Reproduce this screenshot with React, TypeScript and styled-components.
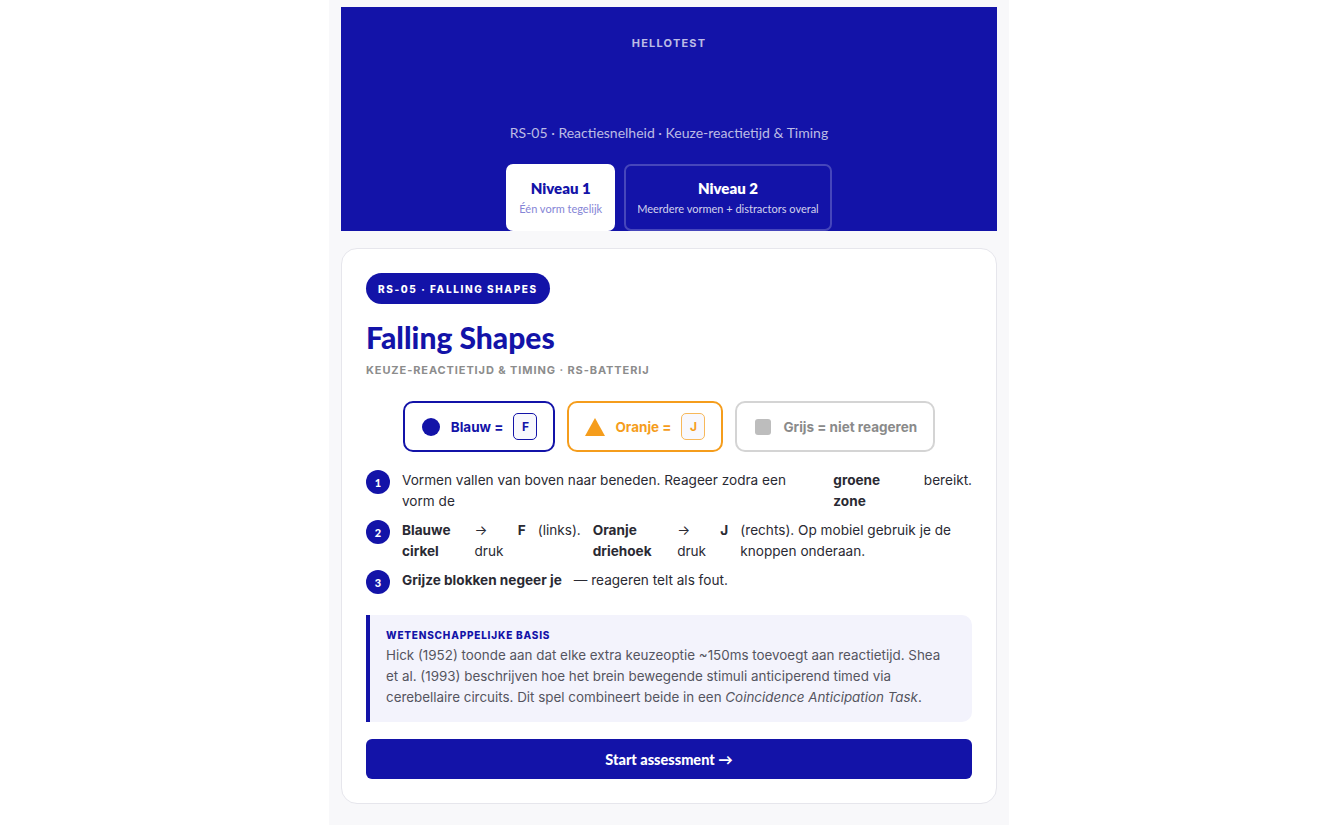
import React from "react"
import styled, { createGlobalStyle } from "styled-components"

const BLUE = "#1313a8"
const ORANGE = "#f59d1c"
const HEAD = `"Lato", "Inter", sans-serif`
const BODY = `"Inter", "Noto Sans", sans-serif`

const GlobalStyle = createGlobalStyle`
  html, body {
    margin: 0;
    padding: 0;
    background: #ffffff;
    font-family: ${BODY};
  }
  * { box-sizing: border-box; }
`

const Column = styled.div`
  width: 680px;
  min-height: 825px;
  margin: 0 auto;
  padding: 7px 12px 24px;
  background: #f8f8fa;
`

const Header = styled.header`
  background: ${BLUE};
  display: flex;
  flex-direction: column;
  align-items: center;
  padding-top: 29px;
  height: 224px;
`

const Brand = styled.div`
  font-family: ${BODY};
  font-size: 11px;
  font-weight: 700;
  letter-spacing: 1.2px;
  color: rgba(255, 255, 255, 0.72);
  line-height: 14px;
`

const Lead = styled.div`
  margin-top: 73px;
  font-family: ${HEAD};
  font-size: 14px;
  color: rgba(255, 255, 255, 0.72);
  line-height: 20px;
`

const Tabs = styled.div`
  margin-top: 21px;
  display: flex;
  gap: 9px;
`

const Tab = styled.div<{ $active?: boolean }>`
  display: flex;
  flex-direction: column;
  align-items: center;
  height: 67px;
  padding: 13px 11px 0;
  border-radius: 7px;
  background: ${p => (p.$active ? "#ffffff" : "transparent")};
  border: 2px solid ${p => (p.$active ? "#ffffff" : "rgba(255,255,255,0.22)")};
`

const TabTitle = styled.div<{ $active?: boolean }>`
  font-family: ${HEAD};
  font-weight: 800;
  font-size: 15px;
  line-height: 18px;
  color: ${p => (p.$active ? BLUE : "#ffffff")};
`

const TabSub = styled.div<{ $active?: boolean }>`
  margin-top: 5px;
  font-family: ${HEAD};
  font-size: 11px;
  line-height: 13px;
  color: ${p => (p.$active ? "#8585d6" : "rgba(255,255,255,0.82)")};
`

const Card = styled.section`
  margin-top: 17px;
  background: #ffffff;
  border: 1px solid #e6e6ec;
  border-radius: 16px;
  padding: 24px 24px 24px;
  display: flex;
  flex-direction: column;
`

const Pill = styled.div`
  align-self: flex-start;
  height: 31px;
  padding: 0 12px;
  border-radius: 16px;
  background: ${BLUE};
  color: #ffffff;
  font-family: ${BODY};
  font-size: 10px;
  font-weight: 800;
  letter-spacing: 1.6px;
  display: flex;
  align-items: center;
`

const Title = styled.h1`
  margin: 16px 0 0;
  font-family: ${HEAD};
  font-size: 30px;
  font-weight: 900;
  line-height: 34px;
  color: ${BLUE};
`

const Subtitle = styled.div`
  margin-top: 9px;
  font-family: ${BODY};
  font-size: 11px;
  font-weight: 700;
  letter-spacing: 0.9px;
  color: #8c8c8c;
  line-height: 14px;
`

const Legend = styled.div`
  margin-top: 24px;
  display: flex;
  justify-content: center;
  gap: 12px;
`

const LegendItem = styled.div<{ $color: string; $border: string }>`
  height: 51px;
  padding: 0 16px;
  display: flex;
  align-items: center;
  gap: 10px;
  border: 2px solid ${p => p.$border};
  border-radius: 10px;
  color: ${p => p.$color};
  font-family: ${BODY};
  font-size: 13.5px;
  font-weight: 700;
`

const IconSlot = styled.span`
  width: 20px;
  display: flex;
  justify-content: center;
`

const Key = styled.span<{ $color: string; $border: string }>`
  width: 24px;
  height: 27px;
  border: 1.5px solid ${p => p.$border};
  border-radius: 5px;
  background: #f8f8fd;
  color: ${p => p.$color};
  display: flex;
  align-items: center;
  justify-content: center;
  font-size: 12px;
  font-weight: 700;
`

const Steps = styled.ol`
  list-style: none;
  margin: 18px 0 0;
  padding: 0;
  display: flex;
  flex-direction: column;
  gap: 8px;
`

const Step = styled.li`
  display: flex;
  gap: 12px;
  align-items: flex-start;
  font-family: ${BODY};
  font-size: 13.6px;
  line-height: 21px;
  color: #2a2a33;

  strong {
    font-weight: 700;
  }
`

const Num = styled.span`
  flex-shrink: 0;
  width: 24px;
  height: 24px;
  border-radius: 50%;
  background: ${BLUE};
  color: #ffffff;
  font-family: ${HEAD};
  font-size: 11px;
  font-weight: 900;
  display: flex;
  align-items: center;
  justify-content: center;
`

const Science = styled.div`
  margin-top: 21px;
  background: #f3f3fc;
  border-left: 4px solid ${BLUE};
  border-radius: 0 10px 10px 0;
  padding: 13px 16px 14px;
`

const ScienceTitle = styled.div`
  font-family: ${BODY};
  font-size: 10px;
  font-weight: 800;
  letter-spacing: 0.8px;
  color: ${BLUE};
  line-height: 14px;
`

const ScienceText = styled.p`
  margin: 3px 0 0;
  font-family: ${BODY};
  font-size: 13.4px;
  line-height: 21px;
  color: #55555f;
`

const StartButton = styled.button`
  margin-top: 17px;
  height: 40px;
  border: none;
  border-radius: 6px;
  background: ${BLUE};
  color: #ffffff;
  font-family: ${HEAD};
  font-size: 14.5px;
  font-weight: 900;
  cursor: pointer;
`

export default function App() {
  return (
    <>
      <GlobalStyle />
      <Column>
        <Header>
          <Brand>HELLOTEST</Brand>
          <Lead>RS-05 · Reactiesnelheid · Keuze-reactietijd &amp; Timing</Lead>
          <Tabs>
            <Tab $active>
              <TabTitle $active>Niveau 1</TabTitle>
              <TabSub $active>Één vorm tegelijk</TabSub>
            </Tab>
            <Tab>
              <TabTitle>Niveau 2</TabTitle>
              <TabSub>Meerdere vormen + distractors overal</TabSub>
            </Tab>
          </Tabs>
        </Header>

        <Card>
          <Pill>RS-05 · FALLING SHAPES</Pill>
          <Title>Falling Shapes</Title>
          <Subtitle>KEUZE-REACTIETIJD &amp; TIMING · RS-BATTERIJ</Subtitle>

          <Legend>
            <LegendItem $color={BLUE} $border={BLUE}>
              <IconSlot>
                <svg width="18" height="18" viewBox="0 0 18 18"><circle cx="9" cy="9" r="9" fill={BLUE} /></svg>
              </IconSlot>
              Blauw =
              <Key $color={BLUE} $border={BLUE}>F</Key>
            </LegendItem>
            <LegendItem $color={ORANGE} $border={ORANGE}>
              <IconSlot>
                <svg width="20" height="18" viewBox="0 0 20 18"><polygon points="10,0 20,18 0,18" fill={ORANGE} /></svg>
              </IconSlot>
              Oranje =
              <Key $color={ORANGE} $border="#f7b85a">J</Key>
            </LegendItem>
            <LegendItem $color="#8a8a8a" $border="#d4d4d4">
              <IconSlot>
                <svg width="16" height="16" viewBox="0 0 16 16"><rect width="16" height="16" rx="3" fill="#bdbdbd" /></svg>
              </IconSlot>
              Grijs = niet reageren
            </LegendItem>
          </Legend>

          <Steps>
            <Step>
              <Num>1</Num>
              Vormen vallen van boven naar beneden. Reageer zodra een vorm de <strong>groene zone</strong> bereikt.
            </Step>
            <Step>
              <Num>2</Num>
              <strong>Blauwe cirkel</strong> → druk <strong>F</strong> (links). <strong>Oranje driehoek</strong> → druk <strong>J</strong> (rechts). Op mobiel gebruik je de knoppen onderaan.
            </Step>
            <Step>
              <Num>3</Num>
              <strong>Grijze blokken negeer je</strong> — reageren telt als fout.
            </Step>
          </Steps>

          <Science>
            <ScienceTitle>WETENSCHAPPELIJKE BASIS</ScienceTitle>
            <ScienceText>
              Hick (1952) toonde aan dat elke extra keuzeoptie ~150ms toevoegt aan reactietijd. Shea et al. (1993) beschrijven hoe het brein bewegende stimuli anticiperend timed via cerebellaire circuits. Dit spel combineert beide in een <em>Coincidence Anticipation Task</em>.
            </ScienceText>
          </Science>

          <StartButton>Start assessment →</StartButton>
        </Card>
      </Column>
    </>
  )
}
